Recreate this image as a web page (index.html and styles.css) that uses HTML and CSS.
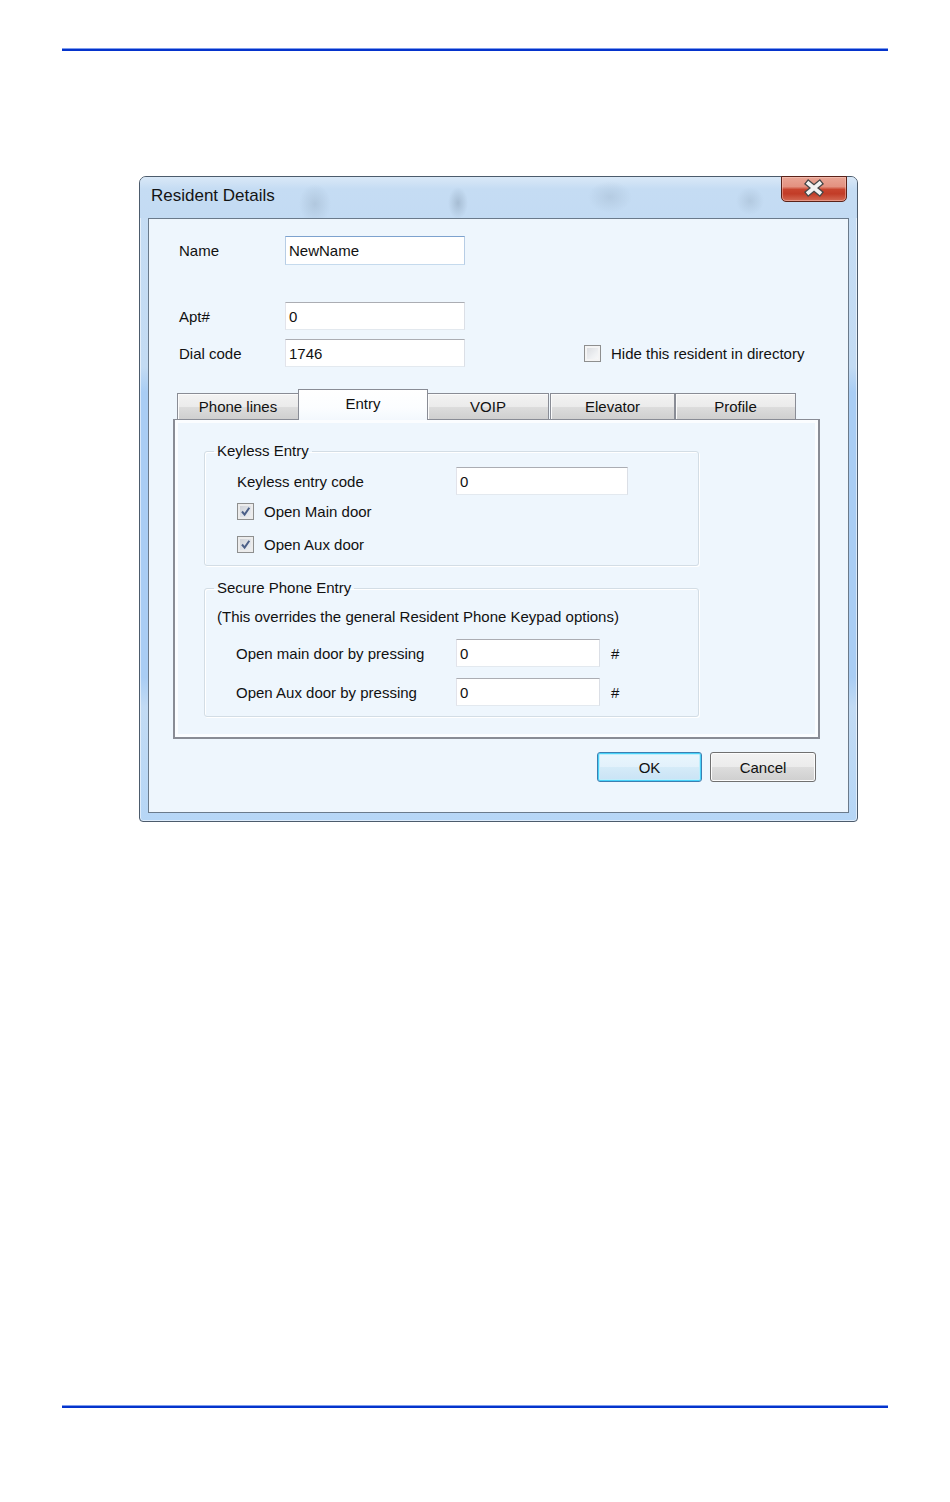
FILE: index.html
```html
<!DOCTYPE html>
<html>
<head>
<meta charset="utf-8">
<title>Resident Details</title>
<link rel="stylesheet" href="styles.css">
</head>
<body>
<div class="page">
  <div class="rule rule-top"></div>

  <div class="window">
    <div class="titlebar">
      <span class="title">Resident Details</span>
      <div class="close">
        <svg width="66" height="26" viewBox="0 0 66 26">
          <path d="M27.5 7.5 L38.5 16.5 M38.5 7.5 L27.5 16.5" stroke="#474747" stroke-width="6.4" stroke-linecap="square" fill="none"/>
          <path d="M27.5 7.5 L38.5 16.5 M38.5 7.5 L27.5 16.5" stroke="#f2f2f2" stroke-width="3.8" stroke-linecap="square" fill="none"/>
        </svg>
      </div>
    </div>

    <div class="client">
      <div class="fields">
        <div class="row row-name">
          <span class="label">Name</span>
          <div class="input input-focus">NewName</div>
        </div>
        <div class="row row-apt">
          <span class="label">Apt#</span>
          <div class="input">0</div>
        </div>
        <div class="row row-dial">
          <span class="label">Dial code</span>
          <div class="input">1746</div>
          <span class="check hide-check">
            <span class="cb"></span>
            <span>Hide this resident in directory</span>
          </span>
        </div>
      </div>

      <div class="tabs">
        <div class="tab tab-phone">Phone lines</div>
        <div class="tab tab-entry selected">Entry</div>
        <div class="tab tab-voip">VOIP</div>
        <div class="tab tab-elev">Elevator</div>
        <div class="tab tab-profile">Profile</div>
      </div>

      <div class="panel">
        <fieldset class="group group-keyless">
          <legend>Keyless Entry</legend>
          <div class="grow grow-code">
            <span class="glabel">Keyless entry code</span>
            <div class="input input-code">0</div>
          </div>
          <div class="grow grow-check">
            <span class="check">
              <span class="cb checked"><svg width="11" height="11" viewBox="0 0 11 11"><path d="M2 5.5 L4.6 8.6 L9.3 1.8" stroke="#4b5f87" stroke-width="2" fill="none"/></svg></span>
              <span>Open Main door</span>
            </span>
          </div>
          <div class="grow grow-check">
            <span class="check">
              <span class="cb checked"><svg width="11" height="11" viewBox="0 0 11 11"><path d="M2 5.5 L4.6 8.6 L9.3 1.8" stroke="#4b5f87" stroke-width="2" fill="none"/></svg></span>
              <span>Open Aux door</span>
            </span>
          </div>
        </fieldset>

        <fieldset class="group group-secure">
          <legend>Secure Phone Entry</legend>
          <div class="note">(This overrides the general Resident Phone Keypad options)</div>
          <div class="grow grow-press">
            <span class="glabel">Open main door by pressing</span>
            <div class="input input-press">0</div>
            <span class="hash">#</span>
          </div>
          <div class="grow grow-press grow-aux">
            <span class="glabel">Open Aux door by pressing</span>
            <div class="input input-press">0</div>
            <span class="hash">#</span>
          </div>
        </fieldset>
      </div>

      <div class="buttons">
        <div class="btn btn-default">OK</div>
        <div class="btn">Cancel</div>
      </div>
    </div>
  </div>

  <div class="rule rule-bottom"></div>
</div>
</body>
</html>
```

FILE: styles.css
```css
html, body {
  margin: 0;
  padding: 0;
  background: #ffffff;
}

body {
  font-family: "Liberation Sans", Arial, sans-serif;
  font-size: 15px;
  color: #111111;
}

.page {
  width: 950px;
  height: 1502px;
  overflow: hidden;
}

.rule {
  width: 826px;
  height: 3px;
  margin-left: 62px;
  background: linear-gradient(#7f9ded 0, #7f9ded 1px, #0433cc 1px, #0433cc 100%);
}

.rule-top {
  margin-top: 48px;
}

.rule-bottom {
  margin-top: 583px;
}

/* window */
.window {
  margin: 125px 0 0 139px;
  width: 719px;
  height: 646px;
  box-sizing: border-box;
  border: 1px solid #4c5b6c;
  border-radius: 7px 7px 4px 4px;
  display: flex;
  flex-direction: column;
  background:
    linear-gradient(to bottom,
      #c6ddf4 0,
      #c3dbf3 190px,
      #a9cdf4 215px,
      #a9cdf4 500px,
      #c2dbf4 530px,
      #b6d6f6 100%);
  box-shadow: inset 0 0 0 1px rgba(255,255,255,0.55);
}

.titlebar {
  height: 41px;
  flex: none;
  display: flex;
  justify-content: space-between;
  align-items: flex-start;
  padding: 0 9px 0 11px;
  border-radius: 6px 6px 0 0;
  background:
    radial-gradient(ellipse 16px 20px at 175px 27px, rgba(110,130,150,0.22), rgba(110,130,150,0) 100%),
    radial-gradient(ellipse 10px 16px at 318px 26px, rgba(90,110,130,0.28), rgba(90,110,130,0) 100%),
    radial-gradient(ellipse 22px 16px at 470px 20px, rgba(110,130,150,0.18), rgba(110,130,150,0) 100%),
    radial-gradient(ellipse 14px 14px at 610px 24px, rgba(110,130,150,0.20), rgba(110,130,150,0) 100%),
    linear-gradient(to bottom, #d9e8f7 0, #c5dcf3 12px, #c3dbf3 100%);
}

.title {
  font-size: 17px;
  line-height: 18px;
  padding-top: 10px;
  color: #141414;
}

.close {
  width: 66px;
  height: 26px;
  margin-top: -1px;
  margin-right: 1px;
  box-sizing: border-box;
  border: 1px solid #5a2219;
  border-radius: 0 0 5px 5px;
  background: linear-gradient(to bottom,
    #e9a595 0,
    #e39180 40%,
    #c8442e 52%,
    #c23c27 70%,
    #d36a54 100%);
  box-shadow: inset 0 0 0 1px rgba(255,210,200,0.45);
  overflow: hidden;
}

.close svg {
  display: block;
  margin: -1px 0 0 -1px;
}

/* client area */
.client {
  flex: 1;
  margin: 0 8px 8px 8px;
  border: 1px solid #6a7a8b;
  background: #eef6fd;
  display: flex;
  flex-direction: column;
}

.fields {
  padding: 17px 0 0 30px;
}

.row {
  display: flex;
  align-items: center;
  height: 28px;
}

.row-name {
  height: 29px;
}

.row-apt {
  margin-top: 37px;
}

.row-dial {
  margin-top: 9px;
}

.label {
  width: 106px;
  flex: none;
}

.input {
  width: 180px;
  height: 100%;
  box-sizing: border-box;
  flex: none;
  background: #ffffff;
  border: 1px solid;
  border-color: #abadb3 #dbdfe6 #e3e9ef #e2e3ea;
  padding: 0 3px;
  display: flex;
  align-items: center;
}

.input-focus {
  border-color: #7da2ce #b7cde5 #c5daed #b7cde5;
}

.check {
  display: flex;
  align-items: center;
  gap: 10px;
}

.hide-check {
  margin-left: 119px;
}

.cb {
  width: 17px;
  height: 17px;
  box-sizing: border-box;
  flex: none;
  border: 1px solid #8e8f8f;
  background: linear-gradient(135deg, #d6d8dc 0, #eef0f2 60%, #fbfbfb 100%);
  box-shadow: inset 0 0 0 2px #f4f4f4;
  display: flex;
  align-items: center;
  justify-content: center;
}

.cb.checked {
  background: linear-gradient(135deg, #c9ccd2 0, #e2e5ea 60%, #f2f3f5 100%);
  box-shadow: inset 0 0 0 2px #ececec;
}

.cb svg {
  display: block;
}

/* tabs */
.tabs {
  display: flex;
  align-items: flex-end;
  height: 30px;
  margin: 22px 0 0 28px;
}

.tab {
  height: 26px;
  box-sizing: border-box;
  border: 1px solid #898c95;
  border-bottom: none;
  background: linear-gradient(to bottom, #f3f3f3 0, #ebebeb 50%, #dddddd 50%, #cfcfcf 100%);
  box-shadow: inset 1px 1px 0 #fbfbfb;
  text-align: center;
  line-height: 25px;
  flex: none;
}

.tab-phone {
  width: 122px;
}

.tab.selected {
  position: relative;
  z-index: 1;
  width: 130px;
  height: 31px;
  margin-left: -1px;
  margin-bottom: -1px;
  line-height: 28px;
  background: linear-gradient(to bottom, #ffffff 0, #fbfdff 60%, #f3f8fd 100%);
  box-shadow: none;
}

.tab-voip {
  width: 122px;
  margin-left: -1px;
}

.tab-elev {
  width: 125px;
  margin-left: 1px;
}

.tab-profile {
  width: 121px;
}

/* panel */
.panel {
  margin-left: 24px;
  width: 647px;
  height: 320px;
  box-sizing: border-box;
  border: 1px solid #898c95;
  border-width: 1px 2px 2px 2px;
  background: #eef6fd;
  box-shadow: inset 0 0 0 3px #fbfdff;
  padding: 0 0 0 29px;
}

.group {
  width: 495px;
  box-sizing: border-box;
  margin: 0;
  border: 1px solid #d3dde5;
  border-radius: 3px;
  box-shadow: 1px 1px 0 #ffffff, inset 1px 1px 0 #ffffff;
  padding: 0;
  min-width: 0;
}

.group legend {
  margin-left: 9px;
  padding: 0 3px;
  line-height: 18px;
}

.group-keyless {
  margin-top: 22px;
  padding: 7px 0 4px 0;
}

.group-secure {
  margin-top: 13px;
  padding: 10px 0 10px 0;
}

.grow {
  display: flex;
  align-items: center;
  padding-left: 32px;
}

.grow-code {
  height: 28px;
}

.grow-code .glabel {
  width: 219px;
}

.input-code {
  width: 172px;
}

.grow-check {
  height: 33px;
}

.note {
  height: 20px;
  line-height: 20px;
  padding-left: 12px;
}

.grow-press {
  height: 28px;
  margin-top: 12px;
  padding-left: 31px;
}

.grow-aux {
  margin-top: 11px;
}

.grow-press .glabel {
  width: 220px;
}

.input-press {
  width: 144px;
}

.hash {
  margin-left: 11px;
}

/* buttons */
.buttons {
  display: flex;
  justify-content: flex-end;
  gap: 8px;
  margin-top: 13px;
  padding-right: 32px;
}

.btn {
  width: 106px;
  height: 30px;
  box-sizing: border-box;
  border: 1px solid #707070;
  border-radius: 3px;
  background: linear-gradient(to bottom, #f2f2f2 0, #ebebeb 50%, #dddddd 50%, #cfcfcf 100%);
  box-shadow: inset 0 0 0 1px #fcfcfc;
  display: flex;
  align-items: center;
  justify-content: center;
}

.btn-default {
  width: 105px;
  border-color: #3c7fb1;
  box-shadow: inset 0 0 0 1px #48d2f9, inset 0 0 0 2px #bfeefc;
  background: linear-gradient(to bottom, #eaf6fd 0, #e2f1fb 50%, #d5ebf8 50%, #c9e3f5 100%);
}
```
